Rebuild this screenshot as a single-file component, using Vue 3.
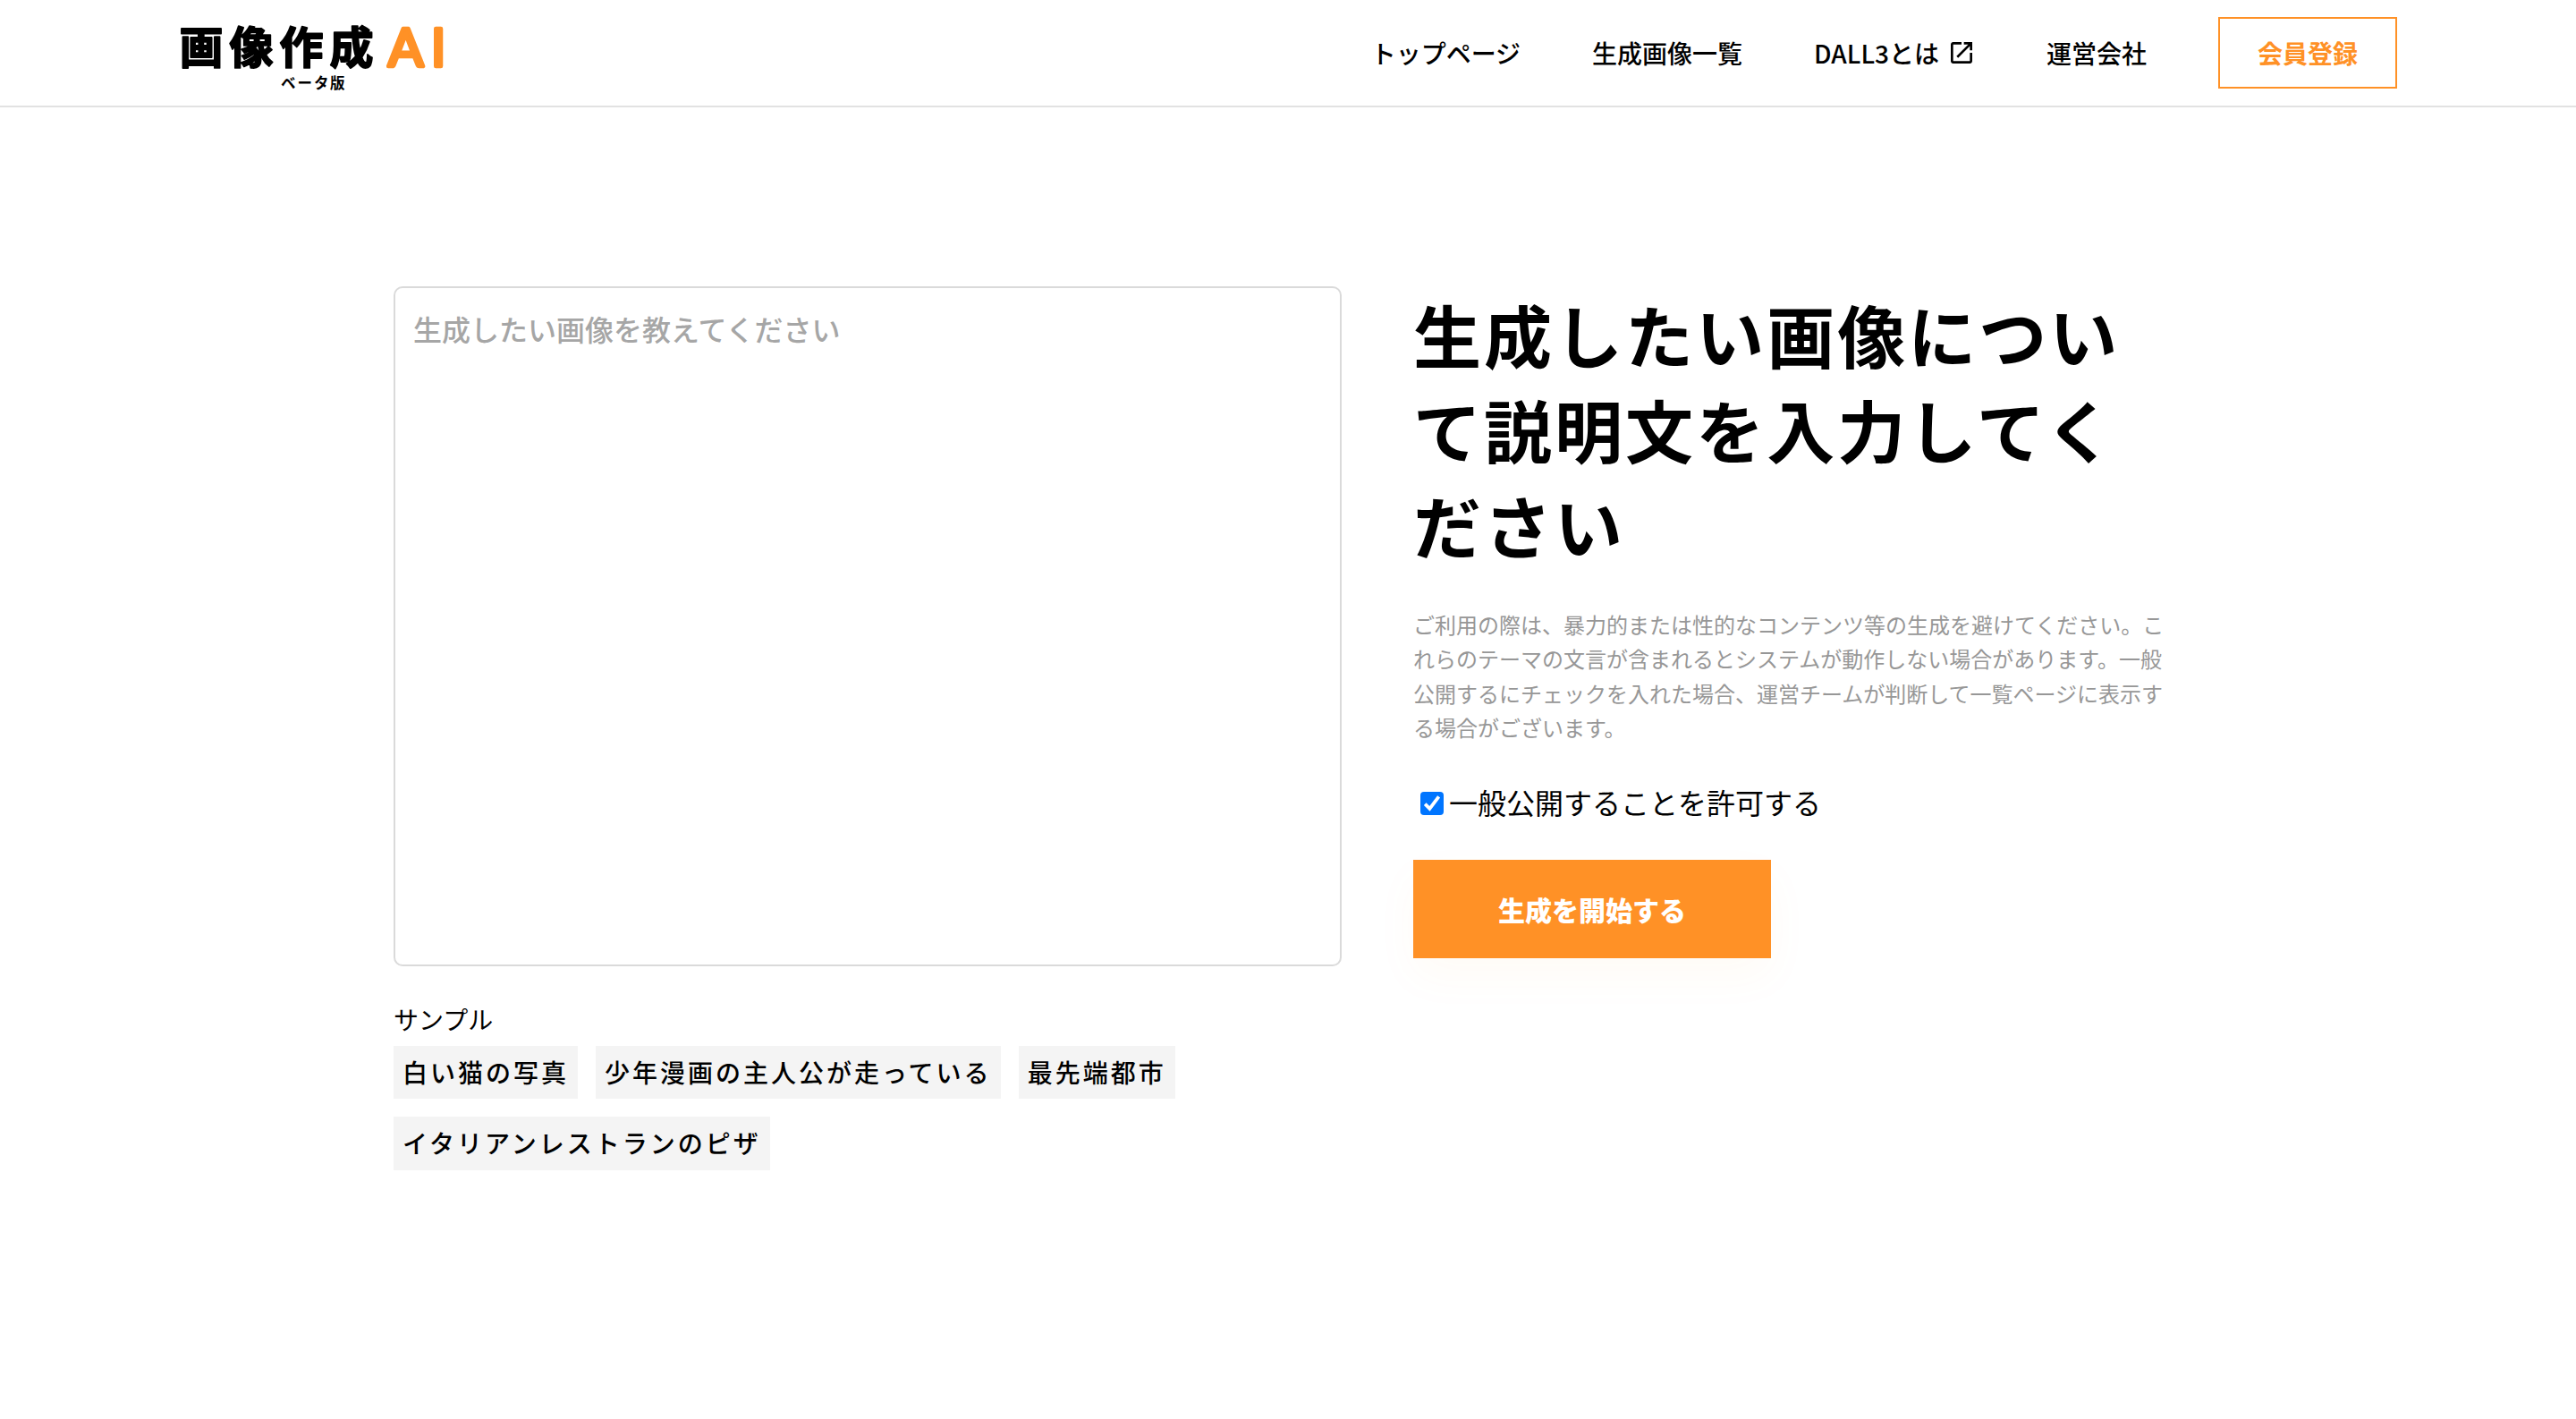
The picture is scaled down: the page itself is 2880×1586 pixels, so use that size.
<script setup>
const links = [
  { label: 'トップページ' },
  { label: '生成画像一覧' },
  { label: 'DALL3とは', external: true },
  { label: '運営会社' },
]
const samples = ['白い猫の写真', '少年漫画の主人公が走っている', '最先端都市', 'イタリアンレストランのピザ']
</script>

<template>
  <div class="page">
    <header class="header">
      <svg class="logo" width="300" height="80" viewBox="0 0 300 80" role="img" aria-label="画像作成AI ベータ版">
        <text class="logo-name" x="0.5 56.5 112.5 168.5" y="52.2">画像作成</text>
        <text class="logo-ai" x="234 282" y="54.5">AI</text>
        <text class="logo-sub" x="114 132.5 151 169" y="80">ベータ版</text>
      </svg>
      <nav class="nav">
        <a v-for="link in links" :key="link.label" class="nav-link">
          <span>{{ link.label }}</span>
          <svg v-if="link.external" class="external" width="32" height="32" viewBox="0 0 24 24">
            <path d="M19 19H5V5h7V3H5c-1.11 0-2 .9-2 2v14c0 1.1.89 2 2 2h14c1.1 0 2-.9 2-2v-7h-2v7zM14 3v2h3.59l-9.83 9.83 1.41 1.41L19 6.41V10h2V3h-7z" />
          </svg>
        </a>
        <a class="register">会員登録</a>
      </nav>
    </header>

    <main class="main">
      <section class="left">
        <textarea class="prompt" placeholder="生成したい画像を教えてください"></textarea>
        <p class="sample-title">サンプル</p>
        <div class="samples">
          <span v-for="sample in samples" :key="sample" class="sample">{{ sample }}</span>
        </div>
      </section>
      <section class="right">
        <h1 class="title">生成したい画像につい<br />て説明文を入力してく<br />ださい</h1>
        <p class="note">ご利用の際は、暴力的または性的なコンテンツ等の生成を避けてください。こ<br />れらのテーマの文言が含まれるとシステムが動作しない場合があります。一般<br />公開するにチェックを入れた場合、運営チームが判断して一覧ページに表示す<br />る場合がございます。</p>
        <label class="allow">
          <svg class="check" width="26" height="26" viewBox="0 0 26 26">
            <rect width="26" height="26" rx="4" fill="#0075ff" />
            <path d="M5.2 13.6 10.4 18.8 20.6 5.4" fill="none" stroke="#fff" stroke-width="3.8" />
          </svg>
          <span>一般公開することを許可する</span>
        </label>
        <button class="start" type="button">生成を開始する</button>
      </section>
    </main>
  </div>
</template>

<style>
body {
  background: #fff;
}
</style>

<style scoped>
.page {
  min-height: 1586px;
  font-family: "Noto Sans CJK JP", sans-serif;
  color: #000;
}
.header {
  box-sizing: border-box;
  height: 120px;
  padding: 0 200px;
  border-bottom: 2px solid #e2e2e2;
  display: flex;
  align-items: center;
  justify-content: space-between;
}
.logo {
  display: block;
  overflow: visible;
}
.logo-name {
  font-family: "Liberation Sans", "Noto Sans CJK JP", sans-serif;
  font-size: 49px;
  font-weight: 700;
  stroke: #000;
  stroke-width: 1.8px;
  stroke-linejoin: round;
}
.logo-ai {
  font-family: Lato, sans-serif;
  font-size: 58px;
  font-weight: 400;
  fill: #ff9126;
  stroke: #ff9126;
  stroke-width: 4.6px;
  stroke-linejoin: round;
}
.logo-sub {
  font-family: "Liberation Sans", "Noto Sans CJK JP", sans-serif;
  font-size: 16.5px;
  font-weight: 700;
}
.nav {
  display: flex;
  align-items: center;
  gap: 80px;
}
.nav-link {
  display: flex;
  align-items: center;
  font-size: 28px;
  font-weight: 500;
  line-height: 40px;
}
.external {
  display: block;
  margin: 0 -1px 0 9px;
}
.register {
  box-sizing: border-box;
  width: 200px;
  height: 80px;
  border: 2px solid #ff9126;
  color: #ff9126;
  font-size: 28px;
  font-weight: 700;
  line-height: 76px;
  text-align: center;
}
.main {
  display: flex;
  gap: 80px;
  padding: 200px 440px 0;
}
.left {
  flex: none;
  width: 1060px;
}
.prompt {
  display: block;
  box-sizing: border-box;
  width: 1060px;
  height: 760px;
  margin: 0;
  padding: 21px 20px 20px;
  border: 2px solid #dadada;
  border-radius: 10px;
  outline: none;
  resize: none;
  background: #fff;
  font-family: inherit;
  font-size: 32px;
  font-weight: 500;
  line-height: 48px;
}
.prompt::placeholder {
  color: #a6a6a6;
  opacity: 1;
}
.sample-title {
  margin: 39px 0 10px;
  font-size: 28px;
  line-height: 40px;
}
.samples {
  display: flex;
  flex-wrap: wrap;
  gap: 20px;
}
.sample {
  box-sizing: border-box;
  height: 59.4px;
  padding: 0 10px;
  background: #f4f4f4;
  font-size: 28px;
  font-weight: 500;
  line-height: 59.4px;
  letter-spacing: 3px;
  white-space: nowrap;
}
.right {
  flex: none;
  width: 860px;
}
.title {
  margin: 0;
  font-size: 76px;
  font-weight: 700;
  line-height: 106.4px;
  letter-spacing: 3.04px;
  white-space: nowrap;
}
.note {
  margin: 39.8px 0 0;
  color: #979797;
  font-size: 24px;
  line-height: 38.4px;
  white-space: nowrap;
}
.allow {
  display: flex;
  align-items: center;
  margin-top: 39.4px;
  padding-left: 8px;
  font-size: 32px;
  line-height: 48px;
}
.check {
  display: block;
  margin: 4px 6px 0 0;
}
.start {
  display: block;
  width: 400px;
  height: 110px;
  margin: 41px 0 0;
  padding: 0;
  border: 0;
  background: #ff9126;
  box-shadow: 0 20px 50px rgba(255, 145, 38, 0.04);
  color: #fff;
  font-family: inherit;
  font-size: 30px;
  font-weight: 900;
  line-height: 110px;
  text-align: center;
}
</style>
